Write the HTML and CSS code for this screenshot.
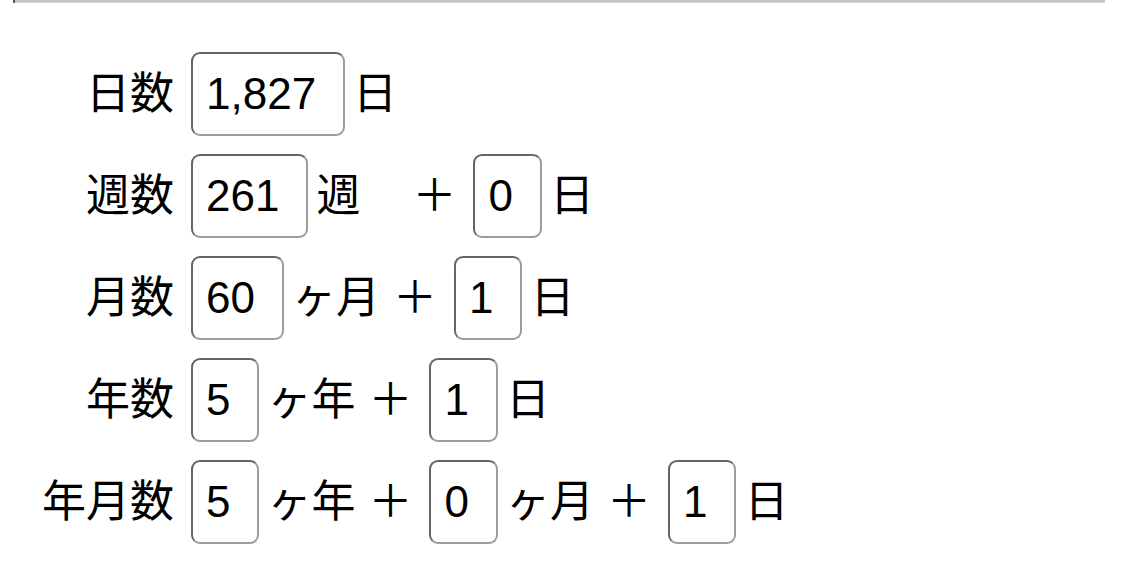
FILE: index.html
```html
<!DOCTYPE html>
<html lang="ja">
<head>
<meta charset="utf-8">
<title>期間</title>
<link rel="stylesheet" href="styles.css">
</head>
<body>
<div class="topbar"></div>
<div class="rows">
  <div class="label">日数</div>
  <div class="line">
    <span class="box">1,827</span><span class="unit">日</span>
  </div>

  <div class="label">週数</div>
  <div class="line">
    <span class="box">261</span><span class="unit">週</span><span class="plus wide">＋</span><span class="box">0</span><span class="unit">日</span>
  </div>

  <div class="label">月数</div>
  <div class="line">
    <span class="box">60</span><span class="unit">ヶ月</span><span class="plus">＋</span><span class="box">1</span><span class="unit">日</span>
  </div>

  <div class="label">年数</div>
  <div class="line">
    <span class="box">5</span><span class="unit">ヶ年</span><span class="plus">＋</span><span class="box">1</span><span class="unit">日</span>
  </div>

  <div class="label">年月数</div>
  <div class="line">
    <span class="box">5</span><span class="unit">ヶ年</span><span class="plus">＋</span><span class="box">0</span><span class="unit">ヶ月</span><span class="plus">＋</span><span class="box">1</span><span class="unit">日</span>
  </div>
</div>
</body>
</html>
```

FILE: styles.css
```css
html, body {
  margin: 0;
  padding: 0;
  background: #ffffff;
}

body {
  font-family: "Liberation Sans", "Noto Sans CJK JP", sans-serif;
  font-size: 44px;
  color: #000000;
}

.topbar {
  margin: 0 20px 0 13px;
  height: 3px;
  background: linear-gradient(to bottom, #c4c4c4 0, #c4c4c4 2px, #e2e2e2 3px);
  border-left: 2px solid #555555;
}

.rows {
  display: grid;
  grid-template-columns: auto auto;
  justify-content: start;
  align-items: center;
  column-gap: 17px;
  row-gap: 18px;
  padding-left: 42px;
  margin-top: 49px;
}

.label {
  text-align: right;
  line-height: 1;
  white-space: nowrap;
}

.line {
  display: flex;
  align-items: center;
  white-space: nowrap;
}

.box {
  display: inline-flex;
  align-items: center;
  box-sizing: border-box;
  height: 84px;
  padding: 0 27px 0 13px;
  border: 2px solid;
  border-color: #666666 #9d9d9d #9d9d9d #666666;
  border-radius: 9px;
  background: #ffffff;
  line-height: 1;
}

.unit {
  margin-left: 8px;
  line-height: 1;
}

.plus {
  margin-left: 13px;
  margin-right: 17px;
  line-height: 1;
}

.plus.wide {
  margin-left: 52px;
}
```
